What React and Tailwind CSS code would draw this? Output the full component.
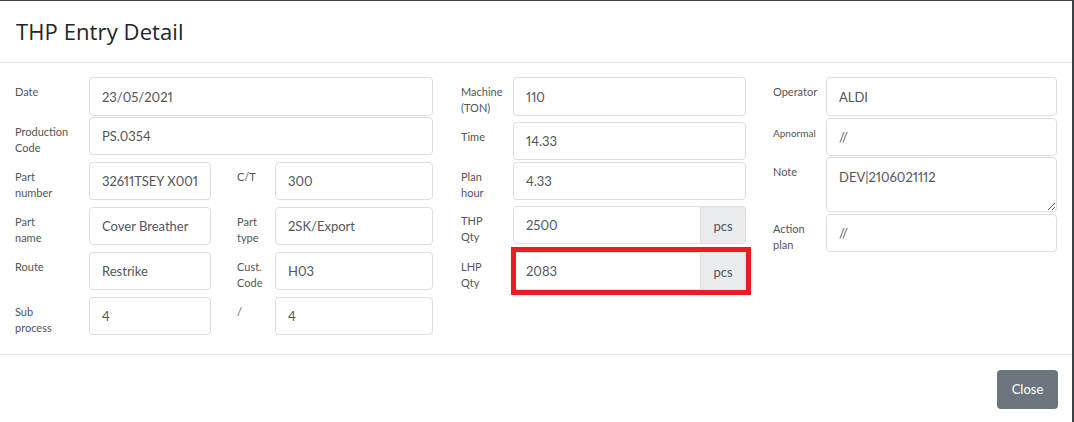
import React from 'react';

const inputCls =
  'w-full h-full border border-[#dedede] rounded-[4px] px-3 text-[13px] text-[#50565c] bg-white outline-none proportional-nums';

const Label = ({ children, width, small }) => (
  <div
    className={`shrink-0 pt-[7px] leading-[16px] text-[#555] ${small ? 'text-[10px]' : 'text-[11px]'}`}
    style={{ width }}
  >
    {children}
  </div>
);

const Input = ({ value }) => <input readOnly value={value} className={inputCls} />;

const AddonInput = ({ value }) => (
  <div className="flex h-full w-full">
    <input
      readOnly
      value={value}
      className="flex-1 min-w-0 h-full border border-[#dedede] rounded-l-[4px] px-3 text-[13px] text-[#50565c] bg-white outline-none proportional-nums"
    />
    <div className="w-[45px] h-full flex items-center justify-center pt-[3px] bg-[#e9ecef] border border-l-0 border-[#dedede] rounded-r-[4px] text-[13px] text-[#50565c]">
      pcs
    </div>
  </div>
);

const App = () => {
  return (
    <div className="w-[1074px] h-[422px] overflow-hidden bg-[#3b4046]">
      <div className="mt-px w-[1072px] h-[421px] bg-white flex flex-col font-['Lato','Liberation_Sans',sans-serif]">
        {/* header */}
        <div className="h-[62px] shrink-0 flex items-center pl-4 border-b border-[#e6e6e6]">
          <h1 className="text-[22px] font-medium text-[#212529] font-['Open_Sans','Liberation_Sans',sans-serif] tracking-[0.1px]">
            THP Entry Detail
          </h1>
        </div>

        {/* body */}
        <div className="h-[292px] shrink-0 flex px-[15px] pt-[14px] border-b border-[#e6e6e6]">
          {/* left column */}
          <div className="w-[418px] flex flex-col">
            <div className="flex h-[39px]">
              <Label width={74}>Date</Label>
              <Input value="23/05/2021" />
            </div>
            <div className="flex h-[38px] mt-[1px]">
              <Label width={74}>Production<br />Code</Label>
              <Input value="PS.0354" />
            </div>
            {[
              ['Part\nnumber', '32611TSEY X001', 'C/T', '300'],
              ['Part\nname', 'Cover Breather', 'Part\ntype', '2SK/Export'],
              ['Route', 'Restrike', 'Cust.\nCode', 'H03'],
              ['Sub\nprocess', '4', '/', '4'],
            ].map(([l1, v1, l2, v2]) => (
              <div key={l1} className="flex h-[38px] mt-[7px]">
                <Label width={74}><span className="whitespace-pre-line">{l1}</span></Label>
                <div className="w-[122px] shrink-0">
                  <Input value={v1} />
                </div>
                <div className="ml-[26px]">
                  <Label width={38}><span className="whitespace-pre-line">{l2}</span></Label>
                </div>
                <Input value={v2} />
              </div>
            ))}
          </div>

          {/* middle column */}
          <div className="w-[285px] ml-[28px] flex flex-col">
            <div className="flex h-[39px]">
              <Label width={52}>Machine<br />(TON)</Label>
              <Input value="110" />
            </div>
            <div className="flex h-[38px] mt-[6px]">
              <Label width={52}>Time</Label>
              <Input value="14.33" />
            </div>
            <div className="flex h-[38px] mt-[2px]">
              <Label width={52}>Plan<br />hour</Label>
              <Input value="4.33" />
            </div>
            <div className="flex h-[38px] mt-[6px]">
              <Label width={52}>THP<br />Qty</Label>
              <AddonInput value="2500" />
            </div>
            <div className="flex h-[38px] mt-[8px]">
              <Label width={52}>LHP<br />Qty</Label>
              <div className="relative flex-1">
                <AddonInput value="2083" />
                <div className="absolute -left-[2px] -right-[5px] -top-[5px] -bottom-[5px] border-[5px] border-[#ec1c24] pointer-events-none" />
              </div>
            </div>
          </div>

          {/* right column */}
          <div className="w-[284px] ml-[27px] flex flex-col">
            <div className="flex h-[39px]">
              <Label width={53}>Operator</Label>
              <Input value="ALDI" />
            </div>
            <div className="flex h-[38px] mt-[2px]">
              <Label width={53} small>Apnormal</Label>
              <Input value="//" />
            </div>
            <div className="flex h-[55px] mt-[1px]">
              <Label width={53}>Note</Label>
              <textarea
                readOnly
                value="DEV|2106021112"
                className="w-full h-full border border-[#dedede] rounded-[4px] px-3 pt-[9px] leading-[20px] text-[13px] text-[#50565c] bg-white outline-none proportional-nums"
              />
            </div>
            <div className="flex h-[38px] mt-[2px]">
              <Label width={53}>Action<br />plan</Label>
              <Input value="//" />
            </div>
          </div>
        </div>

        {/* footer */}
        <div className="flex justify-end pr-[14px] pt-[15px]">
          <button className="w-[61px] h-[39px] rounded-[4px] bg-[#6c757d] text-white text-[13px]">
            Close
          </button>
        </div>
      </div>
    </div>
  );
};

export default App;
